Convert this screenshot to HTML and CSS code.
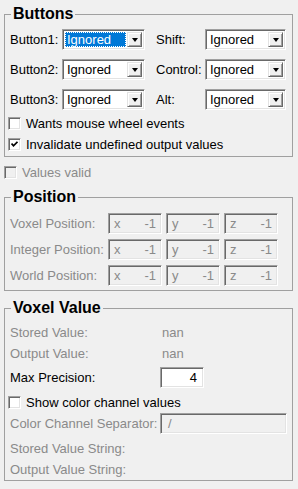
FILE: index.html
```html
<!DOCTYPE html>
<html lang="en">
<head>
  <meta charset="UTF-8" />
  <title>Voxel Picker</title>
  <link rel="stylesheet" href="styles.css">
</head>
<body>
  <fieldset class="group buttons">
    <legend>Buttons</legend>
    <div class="btn-grid">
      <span class="lbl">Button1:</span>
      <div class="combo"><span class="combo-text focused">Ignored</span><span class="combo-btn"><i></i></span></div>
      <span class="lbl">Shift:</span>
      <div class="combo"><span class="combo-text">Ignored</span><span class="combo-btn"><i></i></span></div>

      <span class="lbl">Button2:</span>
      <div class="combo"><span class="combo-text">Ignored</span><span class="combo-btn"><i></i></span></div>
      <span class="lbl">Control:</span>
      <div class="combo"><span class="combo-text">Ignored</span><span class="combo-btn"><i></i></span></div>

      <span class="lbl">Button3:</span>
      <div class="combo"><span class="combo-text">Ignored</span><span class="combo-btn"><i></i></span></div>
      <span class="lbl">Alt:</span>
      <div class="combo"><span class="combo-text">Ignored</span><span class="combo-btn"><i></i></span></div>
    </div>
    <div class="checks">
      <label class="check"><span class="box"></span>Wants mouse wheel events</label>
      <label class="check"><span class="box"><svg width="7" height="7" viewBox="0 0 7 7"><path d="M0.5 2.5 L2.5 4.8 L6.5 0.8" fill="none" stroke="#000" stroke-width="1.8"/></svg></span>Invalidate undefined output values</label>
    </div>
  </fieldset>

  <label class="check disabled valid"><span class="box"></span>Values valid</label>

  <fieldset class="group position disabled">
    <legend>Position</legend>
    <div class="pos-grid">
      <span class="lbl">Voxel Position:</span>
      <div class="field"><span>x</span><span>-1</span></div>
      <div class="field"><span>y</span><span>-1</span></div>
      <div class="field"><span>z</span><span>-1</span></div>

      <span class="lbl">Integer Position:</span>
      <div class="field"><span>x</span><span>-1</span></div>
      <div class="field"><span>y</span><span>-1</span></div>
      <div class="field"><span>z</span><span>-1</span></div>

      <span class="lbl">World Position:</span>
      <div class="field"><span>x</span><span>-1</span></div>
      <div class="field"><span>y</span><span>-1</span></div>
      <div class="field"><span>z</span><span>-1</span></div>
    </div>
  </fieldset>

  <fieldset class="group voxel">
    <legend>Voxel Value</legend>
    <div class="row muted"><span class="lbl">Stored Value:</span><span class="val">nan</span></div>
    <div class="row muted"><span class="lbl">Output Value:</span><span class="val">nan</span></div>
    <div class="row gap3"><span class="lbl">Max Precision:</span><div class="field edit num">4</div></div>
    <div class="row gap4"><label class="check"><span class="box"></span>Show color channel values</label></div>
    <div class="row muted"><span class="lbl">Color Channel Separator:</span><div class="field wide">/</div></div>
    <div class="row muted gap4"><span class="lbl">Stored Value String:</span></div>
    <div class="row muted"><span class="lbl">Output Value String:</span></div>
  </fieldset>
</body>
</html>
```

FILE: styles.css
```css
body {
  margin: 0;
  padding: 5px 5px 0 4px;
  background: #f0f0f0;
  font-family: "Liberation Sans", Arial, sans-serif;
  font-size: 13px;
  color: #000;
}

.group {
  margin: 0;
  padding: 6px 4px 1px 3px;
  border: 1px solid #a0a0a0;
  min-width: 0;
}
.group legend {
  font-weight: bold;
  font-size: 16px;
  line-height: 18px;
  padding: 0 2px;
  margin-left: 3px;
  color: #000;
}
.lbl {
  padding-left: 2px;
  white-space: nowrap;
}

/* buttons */
.btn-grid {
  display: grid;
  grid-template-columns: 54px 92px 51px 81px;
  grid-auto-rows: 21px;
  row-gap: 9px;
  align-items: center;
}
.combo {
  display: flex;
  width: 83px;
  height: 21px;
  box-sizing: border-box;
  background: #fff;
  border: 1px solid;
  border-color: #a0a0a0 #fff #fff #a0a0a0;
  box-shadow: inset 1px 1px 0 #696969, inset -1px -1px 0 #e3e3e3;
  padding: 2px;
}
.btn-grid .combo:nth-child(4n) {
  width: 81px;
}
.combo-text {
  flex: 1;
  line-height: 15px;
  padding-left: 2px;
  margin-right: 1px;
}
.combo-text.focused {
  background: #0078d7;
  color: #fff;
  outline: 1px dotted #fff;
  outline-offset: -1px;
}
.combo-btn {
  width: 15px;
  box-sizing: border-box;
  background: #f0f0f0;
  border: 1px solid;
  border-color: #e3e3e3 #696969 #696969 #e3e3e3;
  box-shadow: inset 1px 1px 0 #fff, inset -1px -1px 0 #a0a0a0;
  display: flex;
  align-items: center;
  justify-content: center;
}
.combo-btn i {
  width: 0;
  height: 0;
  border-left: 3.5px solid transparent;
  border-right: 3.5px solid transparent;
  border-top: 4px solid #000;
}

/* checkboxes */
.checks {
  margin-top: 3px;
}
.check {
  display: flex;
  align-items: center;
  height: 21px;
  gap: 5px;
  white-space: nowrap;
}
.box {
  width: 13px;
  height: 13px;
  box-sizing: border-box;
  background: #fff;
  border: 1px solid;
  border-color: #a0a0a0 #fff #fff #a0a0a0;
  box-shadow: inset 1px 1px 0 #696969, inset -1px -1px 0 #e3e3e3;
  display: flex;
  align-items: center;
  justify-content: center;
  flex: none;
}
.check.disabled {
  color: #8a8a8a;
}
.check.disabled .box {
  background: #f0f0f0;
}
.valid {
  margin-top: 5px;
}

/* position */
.position {
  margin-top: 5px;
  padding-top: 7px;
  padding-bottom: 4px;
}
.disabled .lbl,
.muted .lbl,
.muted .val {
  color: #8a8a8a;
}
.pos-grid {
  display: grid;
  grid-template-columns: 96px 54px 54px 54px;
  grid-auto-rows: 21px;
  column-gap: 4px;
  row-gap: 5px;
  align-items: center;
}
.field {
  height: 21px;
  box-sizing: border-box;
  background: #f0f0f0;
  border: 1px solid;
  border-color: #a0a0a0 #fff #fff #a0a0a0;
  box-shadow: inset 1px 1px 0 #696969, inset -1px -1px 0 #e3e3e3;
  display: flex;
  align-items: center;
  justify-content: space-between;
  padding: 0 5px;
  color: #8a8a8a;
}

/* voxel value */
.voxel {
  margin-top: 8px;
  padding-top: 5px;
  padding-bottom: 0;
}
.row {
  display: flex;
  align-items: center;
  height: 21px;
}
.row .lbl {
  width: 150px;
  flex: none;
}
.val {
  padding-left: 2px;
}
.gap3 {
  margin-top: 3px;
}
.gap4 {
  margin-top: 4px;
}
.field.edit {
  background: #fff;
  color: #000;
  width: 44px;
  justify-content: flex-end;
  padding-right: 6px;
}
.field.wide {
  width: 127px;
  justify-content: flex-start;
  padding-left: 7px;
}
```
